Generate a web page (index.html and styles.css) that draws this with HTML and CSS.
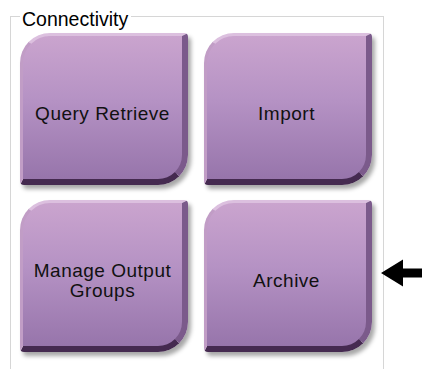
FILE: index.html
```html
<!DOCTYPE html>
<html lang="en">
<head>
    <meta charset="UTF-8">
    <meta name="viewport" content="width=device-width, initial-scale=1.0">
    <title>Connectivity</title>
    <link rel="stylesheet" href="styles.css">
</head>
<body>
    <div class="page">
        <fieldset class="group">
            <legend>Connectivity</legend>
            <div class="tiles">
                <button class="tile">Query Retrieve</button>
                <button class="tile">Import</button>
                <button class="tile">Manage Output<br>Groups</button>
                <button class="tile">Archive</button>
            </div>
        </fieldset>
        <svg class="pointer" width="41" height="28" viewBox="0 0 41 28">
            <path d="M0 14 L22 0.5 L22 9.5 L41 9.5 L41 18.5 L22 18.5 L22 27.5 Z" fill="#000"/>
        </svg>
    </div>
</body>
</html>
```

FILE: styles.css
```css
body {
    margin: 0;
    background: #fff;
    font-family: "Liberation Sans", Arial, sans-serif;
    overflow: hidden;
}
.page {
    display: flex;
    align-items: flex-start;
    padding-top: 2px;
}
.group {
    margin: 0 0 0 10px;
    width: 374px;
    height: 400px;
    box-sizing: border-box;
    border: 1px solid #d6d6d6;
    padding: 3px 0 0 9px;
}
.group legend {
    margin-left: 0;
    padding: 6px 3px 0 2px;
    font-size: 19.5px;
    line-height: 22px;
    color: #000;
}
.tiles {
    display: grid;
    grid-template-columns: 168px 168px;
    grid-template-rows: 152px 152px;
    column-gap: 16px;
    row-gap: 15px;
}
.tile {
    box-sizing: border-box;
    width: 168px;
    height: 152px;
    padding: 12px 0 0 0;
    border-style: solid;
    border-width: 3px 6px 6px 3px;
    border-color: #dcc0df #7b5a8b #452a50 #c19dc6;
    border-radius: 30px 4px 30px 4px;
    background: linear-gradient(#caa4ce, #b592c4 45%, #9775ab);
    box-shadow: 3px 4px 4px rgba(0, 0, 0, 0.35);
    font-family: "Liberation Sans", Arial, sans-serif;
    font-size: 19px;
    letter-spacing: 0.5px;
    line-height: 20px;
    color: #111;
    text-align: center;
    cursor: pointer;
}
.pointer {
    margin-top: 257px;
    margin-left: -3px;
    flex-shrink: 0;
}
```
